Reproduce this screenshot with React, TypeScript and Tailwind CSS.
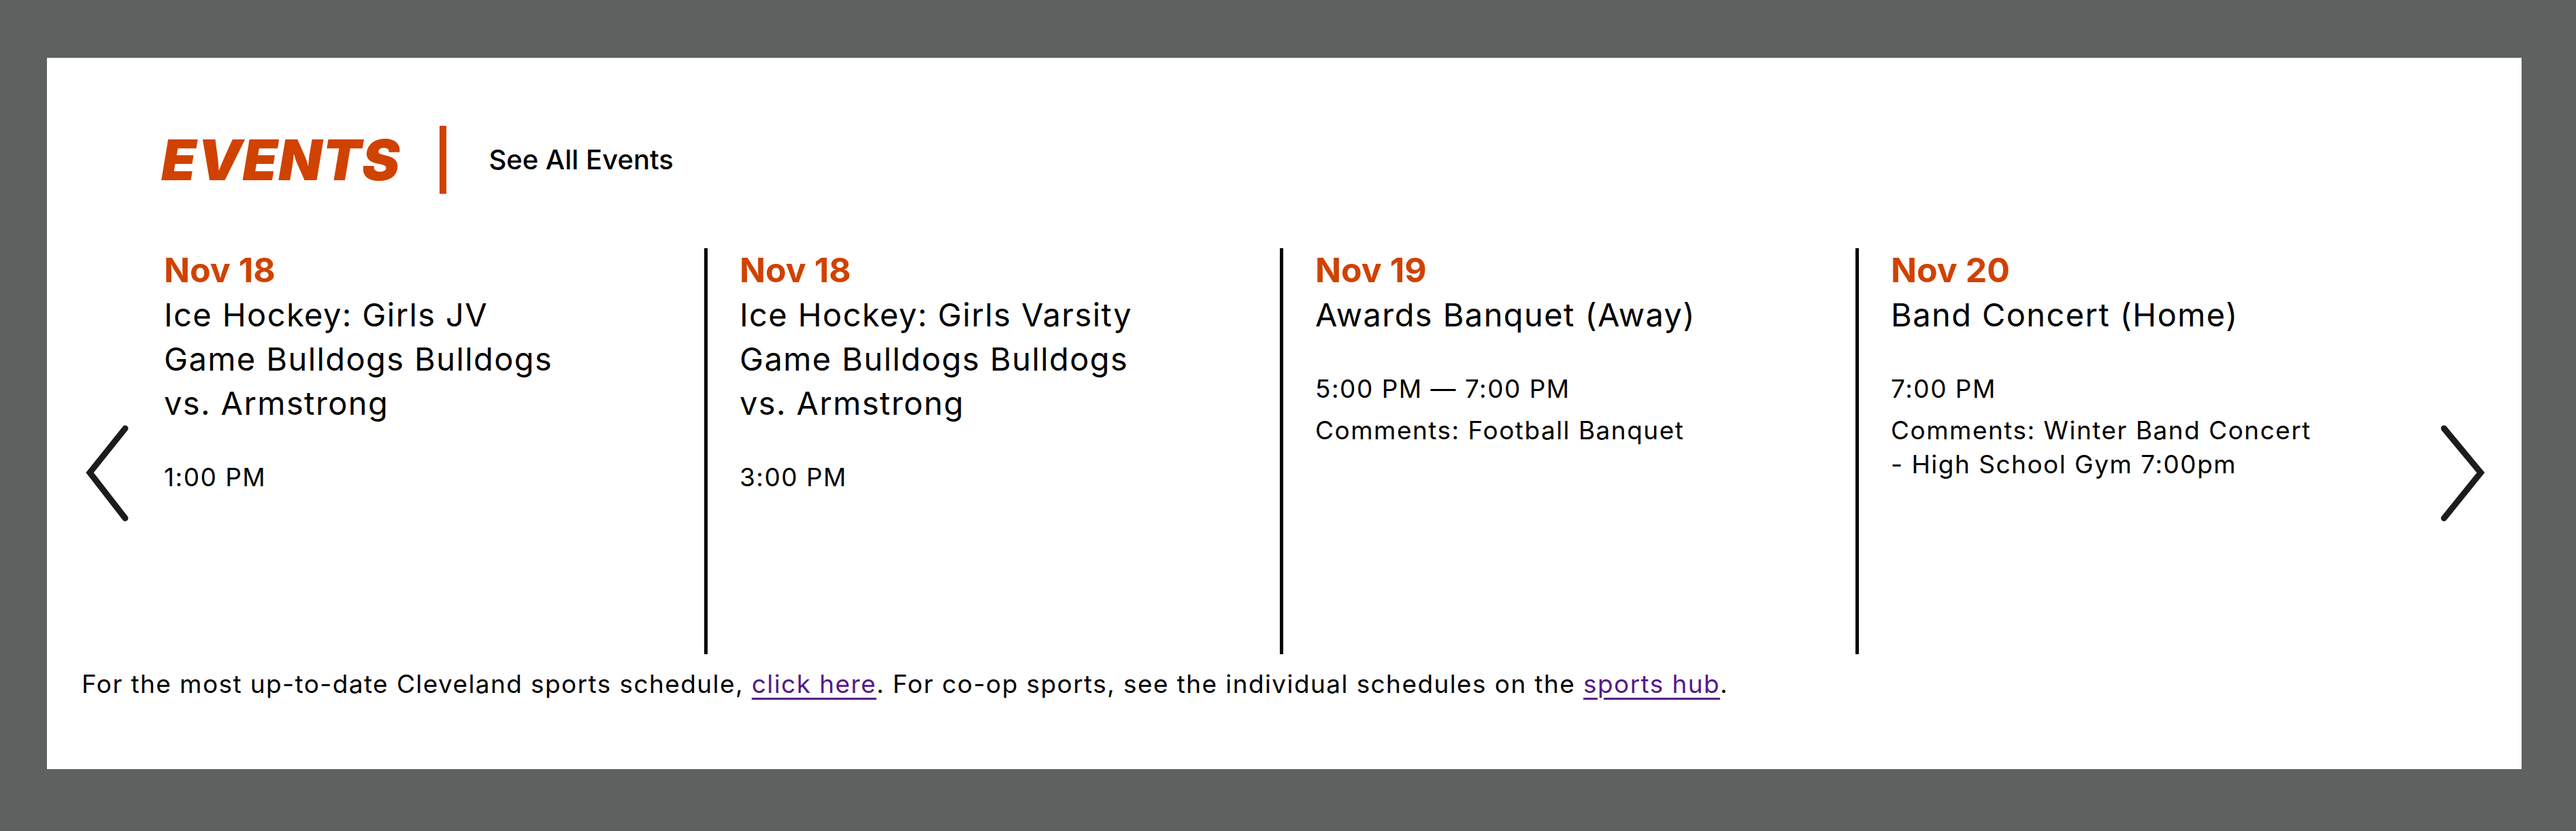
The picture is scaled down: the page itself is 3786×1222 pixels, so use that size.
import React from "react";

type Ev = { date: string; title: string; time: string; comments?: string };

const events: Ev[] = [
  { date: "Nov 18", title: "Ice Hockey: Girls JV Game Bulldogs Bulldogs vs. Armstrong", time: "1:00 PM" },
  { date: "Nov 18", title: "Ice Hockey: Girls Varsity Game Bulldogs Bulldogs vs. Armstrong", time: "3:00 PM" },
  { date: "Nov 19", title: "Awards Banquet (Away)", time: "5:00 PM \u2014 7:00 PM", comments: "Comments: Football Banquet" },
  { date: "Nov 20", title: "Band Concert (Home)", time: "7:00 PM", comments: "Comments: Winter Band Concert - High School Gym 7:00pm" },
];

function Chevron({ dir }: { dir: "left" | "right" }) {
  const pts = dir === "left" ? "64,10 12,75 64,142" : "9,10 63,75 9,142";
  return (
    <svg width="72" height="152" viewBox="0 0 72 152" className="overflow-visible">
      <polyline points={pts} fill="none" stroke="#1c1c1c" strokeWidth="9" strokeLinecap="round" strokeLinejoin="miter" />
    </svg>
  );
}

export default function App() {
  return (
    <div className="w-full h-[1222px] bg-[#5f6161] pt-[85px] pl-[69px] pr-[80px] font-['Inter',sans-serif] text-black">
      <div className="bg-white w-[3637px] pt-[100px] pb-[100px]">
        <div className="flex items-center h-[100px] pl-[168px]">
          <h2 className="text-[83px] leading-none font-black italic text-[#d04200] tracking-[1px]">EVENTS</h2>
          <div className="w-[10px] h-[100px] bg-[#d04200] ml-[58px]" />
          <a className="ml-[62px] text-[40px] font-medium leading-none">See All Events</a>
        </div>
        <div className="flex mt-[80px]">
          <div className="w-[120px] shrink-0 pt-[255px] pl-[51px]">
            <Chevron dir="left" />
          </div>
          {events.map((e, i) => (
            <div
              key={i}
              className={
                "w-[846px] h-[597px] shrink-0 border-l-[5px] pl-[47px] " +
                (i === 0 ? "border-transparent" : "border-black")
              }
            >
              <div className="max-w-[632px]">
                <div className="text-[50px] leading-[65px] font-bold text-[#d04200]">{e.date}</div>
                <div className="max-w-[600px] text-[47px] leading-[65px] tracking-[0.03em]">{e.title}</div>
                <div className="mt-[52px] text-[37px] leading-[50px] tracking-[0.04em]">{e.time}</div>
                {e.comments && (
                  <div className="mt-[11px] text-[37px] leading-[50px] tracking-[0.04em]">{e.comments}</div>
                )}
              </div>
            </div>
          ))}
          <div className="w-[133px] shrink-0 pt-[255px] pl-[10px]">
            <Chevron dir="right" />
          </div>
        </div>
        <p className="pl-[51px] mt-[19px] text-[37px] leading-[50px] tracking-[0.038em]">
          For the most up-to-date Cleveland sports schedule,{" "}
          <a className="text-[#551a8b] underline decoration-[3px] underline-offset-[7px]">click here</a>. For co-op sports, see the
          individual schedules on the{" "}
          <a className="text-[#551a8b] underline decoration-[3px] underline-offset-[7px]">sports hub</a>.
        </p>
      </div>
    </div>
  );
}
